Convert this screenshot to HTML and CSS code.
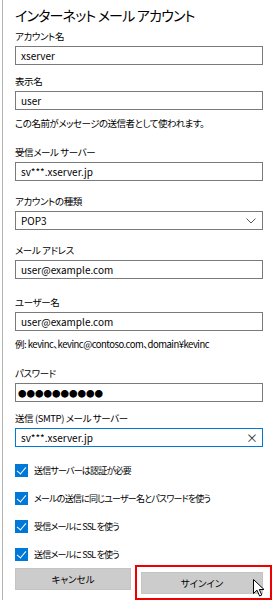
FILE: index.html
```html
<!DOCTYPE html>
<html lang="ja">
<head>
    <meta charset="UTF-8">
    <meta name="viewport" content="width=device-width, initial-scale=1.0">
    <title>インターネット メール アカウント</title>
    <link rel="stylesheet" href="styles.css">
</head>
<body>
    <section class="panel">
        <h1 class="title">インターネット メール アカウント</h1>

        <div class="field field-tight">
            <label class="label">アカウント名</label>
            <div class="box">xserver</div>
        </div>

        <div class="field">
            <label class="label">表示名</label>
            <div class="box">user</div>
            <p class="hint">この名前がメッセージの送信者として使われます。</p>
        </div>

        <div class="field field-wide">
            <label class="label">受信メール サーバー</label>
            <div class="box">sv***.xserver.jp</div>
        </div>

        <div class="field field-wide">
            <label class="label">アカウントの種類</label>
            <div class="box box-select">
                <span>POP3</span>
                <svg class="chevron" width="10" height="6" viewBox="0 0 10 6"><path d="M0.5 0.5 L5 5 L9.5 0.5" fill="none" stroke="#555" stroke-width="1"/></svg>
            </div>
        </div>

        <div class="field field-wider">
            <label class="label">メール アドレス</label>
            <div class="box">user@example.com</div>
        </div>

        <div class="field">
            <label class="label">ユーザー名</label>
            <div class="box">user@example.com</div>
            <p class="hint">例: kevinc、kevinc@contoso.com、domain¥kevinc</p>
        </div>

        <div class="field field-tight">
            <label class="label">パスワード</label>
            <div class="box box-pass">●●●●●●●●●●</div>
        </div>

        <div class="field">
            <label class="label">送信 (SMTP) メール サーバー</label>
            <div class="box box-focus">
                <span>sv***.xserver.jp</span>
                <span class="clear">×</span>
            </div>
        </div>

        <ul class="checks">
            <li class="check"><span class="tick"></span>送信サーバーは認証が必要</li>
            <li class="check"><span class="tick"></span>メールの送信に同じユーザー名とパスワードを使う</li>
            <li class="check"><span class="tick"></span>受信メールに SSL を使う</li>
            <li class="check"><span class="tick"></span>送信メールに SSL を使う</li>
        </ul>

        <div class="actions">
            <button class="btn">キャンセル</button>
            <div class="signin">
                <button class="btn">サインイン</button>
                <!-- 赤枠とマウスカーソルは上に重ねる -->
                <span class="highlight"></span>
                <svg class="cursor" width="12" height="18" viewBox="0 0 12 18"><path d="M0.5 0.5 L0.5 14.5 L4 11.2 L6.6 17 L8.8 16 L6.3 10.5 L11 10.5 Z" fill="#fff" stroke="#000" stroke-width="1" stroke-linejoin="round"/></svg>
            </div>
        </div>
    </section>
</body>
</html>
```

FILE: styles.css
```css
body {
    margin: 0;
    background-color: #fff;
    font-family: "Noto Sans CJK JP", "Noto Sans", sans-serif;
    font-feature-settings: "palt";
    color: #000;
}

.panel {
    margin-left: 2px;
    border-left: 1px solid #b4b4b4;
    padding: 5px 15px 0 12px;
    height: 595px;
}

.title {
    margin: 0 0 3px;
    font-size: 14px;
    font-weight: normal;
    line-height: 20px;
    letter-spacing: -0.8px;
}

.field {
    margin-bottom: 11px;
}

.field-tight {
    margin-bottom: 8px;
}

.field-wide {
    margin-bottom: 12px;
}

.field-wider {
    margin-bottom: 15px;
}

.label {
    display: block;
    font-size: 9.5px;
    line-height: 16px;
    margin-bottom: 2px;
    letter-spacing: -0.4px;
}

.box {
    display: flex;
    align-items: center;
    justify-content: space-between;
    height: 17px;
    border: 1px solid #7a7a7a;
    padding: 0 5px;
    font-size: 10px;
}

.box-select {
    padding-right: 6px;
}

.box-pass {
    font-size: 8.5px;
    padding-left: 2px;
}

.box-focus {
    border-color: #0078d7;
    padding-right: 4px;
}

.clear {
    font-size: 12px;
    color: #333;
}

.hint {
    margin: 5px 0 13px;
    font-size: 9.5px;
    line-height: 16px;
    letter-spacing: -0.5px;
    white-space: nowrap;
}

.checks {
    list-style: none;
    margin: -2px 0 0;
    padding: 0;
}

.check {
    display: flex;
    align-items: center;
    gap: 6px;
    height: 28px;
    font-size: 9px;
    letter-spacing: -0.8px;
    white-space: nowrap;
}

.tick {
    position: relative;
    flex: none;
    width: 13px;
    height: 13px;
    background-color: #0078d7;
}

.tick::after {
    content: "";
    position: absolute;
    left: 4px;
    top: 1px;
    width: 4px;
    height: 8px;
    border: solid #fff;
    border-width: 0 1.5px 1.5px 0;
    transform: rotate(40deg);
}

.actions {
    display: grid;
    grid-template-columns: 116px 1fr;
    gap: 10px;
}

.signin {
    position: relative;
}

.highlight {
    position: absolute;
    left: -6px;
    right: -9px;
    top: -3px;
    bottom: -6px;
    border: 2px solid #e00;
}

.btn {
    width: 100%;
    height: 22px;
    border: 1px solid #c4c4c4;
    background-color: #cccccc;
    font-family: inherit;
    font-feature-settings: "palt";
    font-size: 9.5px;
    color: #000;
    padding: 0;
}

.cursor {
    position: absolute;
    left: 112px;
    top: 11px;
}
```
